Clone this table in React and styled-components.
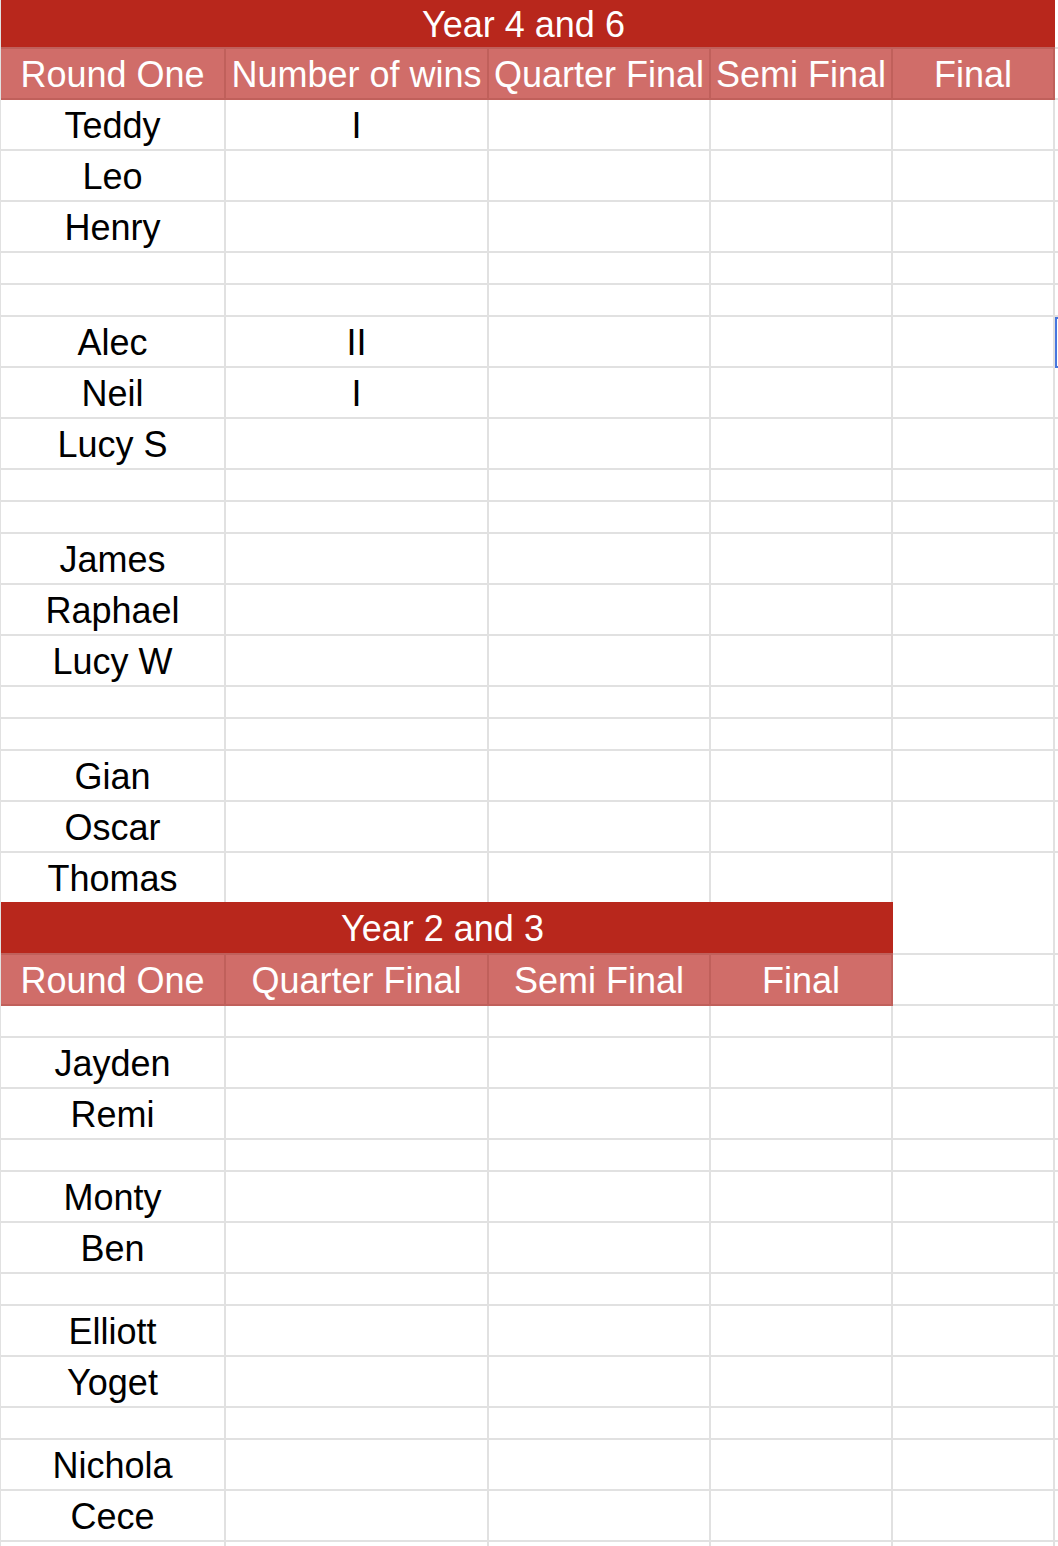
import React from 'react'
import styled, { createGlobalStyle } from 'styled-components'

const GlobalStyle = createGlobalStyle`
  html, body {
    margin: 0;
    padding: 0;
    background: #fff;
  }
  body {
    font-family: "Liberation Sans", Arial, sans-serif;
  }
`

// column widths include each cell's 2px right gridline
const COLS = '225px 263px 222px 182px 162px 1fr'
const GRID = '#e1e1e1'
const HEAD_LINE = '#c0605b'

const Sheet = styled.div`
  width: 1058px;
  height: 1546px;
  overflow: hidden;
  box-sizing: border-box;
  border-left: 1px solid ${GRID};
`

const Row = styled.div`
  display: grid;
  grid-template-columns: ${COLS};
  height: ${(p) => p.$h}px;
  ${(p) => p.$open && `& > div { border-bottom: none; }`}
`

const Base = styled.div`
  box-sizing: border-box;
  display: flex;
  align-items: center;
  justify-content: center;
  padding-top: 3px;
  font-size: 36px;
  white-space: nowrap;
  overflow: hidden;
`

const Title = styled(Base)`
  grid-column: span ${(p) => p.$span};
  background: #b8271c;
  color: #fff;
  border-bottom: 2px solid ${HEAD_LINE};
  padding-right: 9px;
`

const Head = styled(Base)`
  background: #d06d69;
  color: #fff;
  border-right: 2px solid ${HEAD_LINE};
  border-bottom: 2px solid ${HEAD_LINE};
`

const Cell = styled(Base)`
  color: #000;
  border-right: 2px solid ${GRID};
  border-bottom: 2px solid ${GRID};
`

const Edge = styled.div`
  box-sizing: border-box;
  border-bottom: 2px solid ${GRID};
  ${(p) =>
    p.$selected &&
    `
    border-bottom: none;
    box-shadow: inset 2px 0 0 #4676de, inset 0 2px 0 #4676de, inset 0 -2px 0 #4676de;
  `}
`

const NAME_ROW = 51
const GAP_ROW = 32

// first table: name, wins
const senior = [
  ['Teddy', 'I'], ['Leo'], ['Henry'], null, null,
  ['Alec', 'II', true], ['Neil', 'I'], ['Lucy S'], null, null,
  ['James'], ['Raphael'], ['Lucy W'], null, null,
  ['Gian'], ['Oscar'], ['Thomas'],
]

const junior = [
  null, 'Jayden', 'Remi', null, 'Monty', 'Ben', null,
  'Elliott', 'Yoget', null, 'Nichola', 'Cece', null,
]

const App = () => {
  return (
    <>
      <GlobalStyle />
      <Sheet>
        {/* Year 4 and 6 */}
        <Row $h={49}>
          <Title $span={5}>Year 4 and 6</Title>
          <Edge />
        </Row>
        <Row $h={51}>
          <Head>Round One</Head>
          <Head>Number of wins</Head>
          <Head>Quarter Final</Head>
          <Head>Semi Final</Head>
          <Head>Final</Head>
          <Edge />
        </Row>
        {senior.map((r, i) => {
          const last = i === senior.length - 1
          if (!r) {
            return (
              <Row key={i} $h={GAP_ROW}>
                <Cell /><Cell /><Cell /><Cell /><Cell /><Edge />
              </Row>
            )
          }
          return (
            <Row key={i} $h={last ? 49 : NAME_ROW} $open={last}>
              <Cell>{r[0]}</Cell>
              <Cell>{r[1] || ''}</Cell>
              <Cell /><Cell /><Cell />
              <Edge $selected={r[2]} />
            </Row>
          )
        })}

        {/* Year 2 and 3 */}
        <Row $h={53}>
          <Title $span={4}>Year 2 and 3</Title>
          <Cell />
          <Edge />
        </Row>
        <Row $h={51}>
          <Head>Round One</Head>
          <Head>Quarter Final</Head>
          <Head>Semi Final</Head>
          <Head>Final</Head>
          <Cell />
          <Edge />
        </Row>
        {junior.map((name, i) => (
          <Row key={i} $h={name ? NAME_ROW : GAP_ROW}>
            <Cell>{name || ''}</Cell>
            <Cell /><Cell /><Cell /><Cell /><Edge />
          </Row>
        ))}
      </Sheet>
    </>
  )
}

export default App
